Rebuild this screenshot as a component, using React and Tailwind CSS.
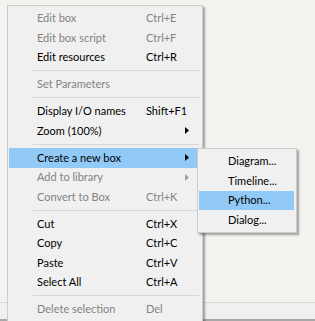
import React from "react";

const mainItems = [
  { label: "Edit box", shortcut: "Ctrl+E", disabled: true },
  { label: "Edit box script", shortcut: "Ctrl+F", disabled: true },
  { label: "Edit resources", shortcut: "Ctrl+R" },
  { sep: true },
  { label: "Set Parameters", disabled: true },
  { sep: true },
  { label: "Display I/O names", shortcut: "Shift+F1" },
  { label: "Zoom (100%)", arrow: true },
  { sep: true },
  { label: "Create a new box", arrow: true, active: true },
  { label: "Add to library", arrow: true, disabled: true },
  { label: "Convert to Box", shortcut: "Ctrl+K", disabled: true },
  { sep: true },
  { label: "Cut", shortcut: "Ctrl+X" },
  { label: "Copy", shortcut: "Ctrl+C" },
  { label: "Paste", shortcut: "Ctrl+V" },
  { label: "Select All", shortcut: "Ctrl+A" },
  { sep: true },
  { label: "Delete selection", shortcut: "Del", disabled: true },
];

const subItems = ["Diagram...", "Timeline...", "Python...", "Dialog..."];

function Arrow({ disabled }) {
  return (
    <svg width="4" height="7" viewBox="0 0 4 7">
      <path d="M0 0 L4 3.5 L0 7 Z" fill={disabled ? "#a0a0a0" : "#000"} />
    </svg>
  );
}

function MenuRow({ item }) {
  return (
    <div
      className={
        "flex h-[19.5px] items-center ml-[1px] mr-[5px] " +
        (item.active ? "bg-[#91c9f7] " : "") +
        (item.disabled ? "text-[#838383]" : "text-black")
      }
    >
      <span className="pl-[28px] w-[137px] whitespace-nowrap">{item.label}</span>
      <span className="w-[39px] whitespace-nowrap">{item.shortcut}</span>
      {item.arrow && <Arrow disabled={item.disabled} />}
    </div>
  );
}

export default function App() {
  return (
    <div
      className="relative flex flex-col h-[321px] w-[315px] overflow-hidden bg-[#f3f3ef] text-[11px]"
      style={{ fontFamily: 'Lato, "Noto Sans", sans-serif' }}
    >
      <div className="flex-1" />
      <div className="h-[19px] border-t border-[#dadada] border-b-2 border-b-[#a8a8a8] bg-[#f0f0f0]" />

      <div className="absolute left-[7px] top-[5px] w-[196px] h-[320px] border border-[#cccccc] bg-[#f0f0f0] pt-[2.5px] shadow-[2px_2px_2px_rgba(0,0,0,0.35)]">
        {mainItems.map((item, i) =>
          item.sep ? (
            <div key={i} className="flex h-[7.5px] items-center pl-[25px] pr-[3px]">
              <div className="h-px w-full bg-[#d7d7d7]" />
            </div>
          ) : (
            <MenuRow key={i} item={item} />
          )
        )}
      </div>

      <div className="absolute left-[197px] top-[148px] w-[100px] border border-[#cccccc] bg-[#f0f0f0] pt-[2.5px] pb-[2px] shadow-[2px_2px_2px_rgba(0,0,0,0.35)]">
        {subItems.map((s) => (
          <div
            key={s}
            className={
              "flex h-[19.5px] items-center ml-[1px] mr-[2px] pl-[29px] whitespace-nowrap " +
              (s === "Python..." ? "bg-[#91c9f7]" : "")
            }
          >
            {s}
          </div>
        ))}
      </div>
    </div>
  );
}
